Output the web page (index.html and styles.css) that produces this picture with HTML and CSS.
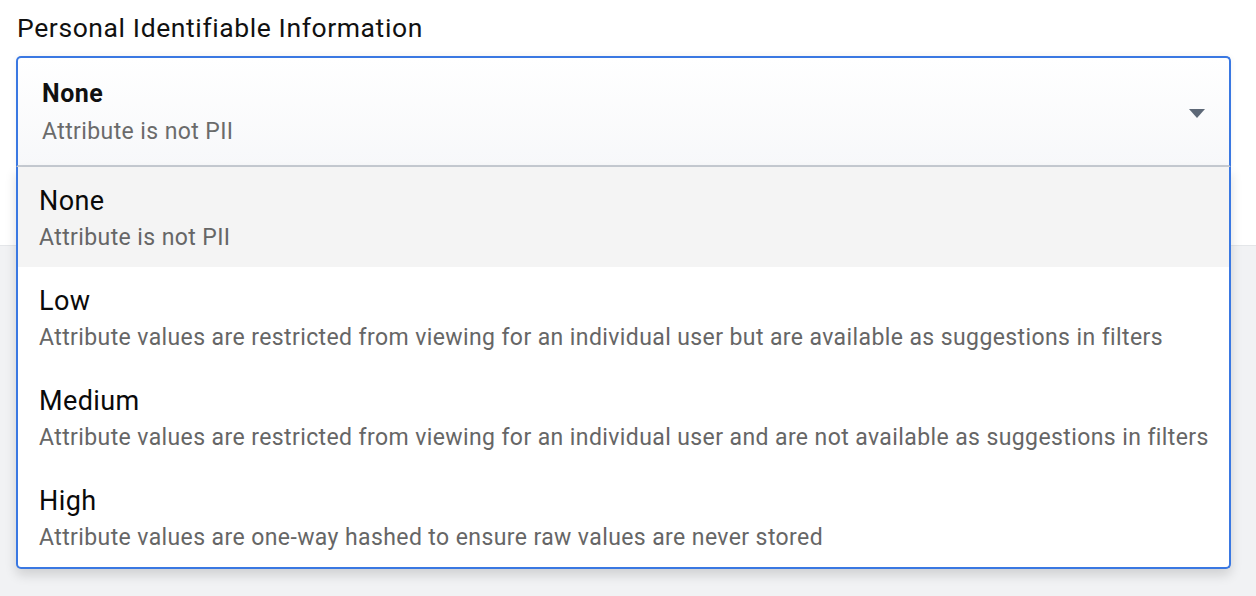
FILE: index.html
```html
<!DOCTYPE html>
<html>
<head>
<meta charset="utf-8">
<link rel="stylesheet" href="styles.css">
</head>
<body>
<div class="panel">
  <div class="label">Personal Identifiable Information</div>
  <div class="field">
    <div class="select">
      <div class="sel-text">
        <div class="sel-title">None</div>
        <div class="sel-sub">Attribute is not PII</div>
      </div>
      <svg class="arrow" width="16" height="9" viewBox="0 0 16 9"><path d="M0 0 H16 L8 9 Z" fill="#5d6877"/></svg>
    </div>
    <div class="menu">
      <div class="item active">
        <div class="title">None</div>
        <div class="sub">Attribute is not PII</div>
      </div>
      <div class="item">
        <div class="title">Low</div>
        <div class="sub">Attribute values are restricted from viewing for an individual user but are available as suggestions in filters</div>
      </div>
      <div class="item">
        <div class="title">Medium</div>
        <div class="sub">Attribute values are restricted from viewing for an individual user and are not available as suggestions in filters</div>
      </div>
      <div class="item">
        <div class="title">High</div>
        <div class="sub">Attribute values are one-way hashed to ensure raw values are never stored</div>
      </div>
    </div>
  </div>
</div>
</body>
</html>
```
FILE: styles.css
```css
html, body {
  margin: 0;
  padding: 0;
}
body {
  background: #f1f2f4;
  font-family: Roboto, "Liberation Sans", sans-serif;
  width: 1256px;
  height: 596px;
  overflow: hidden;
}
.panel {
  background: #fff;
  height: 246px;
  border-bottom: 1px solid #e4e6e9;
  padding: 13px 25px 0 16px;
  box-sizing: border-box;
}
.label {
  font-size: 26.5px;
  letter-spacing: 0.6px;
  line-height: 30px;
  color: #111;
  margin-left: 1px;
  margin-bottom: 13px;
}
.field {
  position: relative;
}
.select {
  display: flex;
  align-items: center;
  justify-content: space-between;
  border: 2px solid #3a78e2;
  border-bottom: 2px solid #c6cbd2;
  border-radius: 5px 5px 0 0;
  background: linear-gradient(#ffffff, #f7f8fa);
  padding: 19px 24px 19px 24px;
  box-shadow: 0 0 6px rgba(0, 0, 0, 0.06);
}
.sel-title {
  font-size: 25px;
  letter-spacing: 0.5px;
  font-weight: 700;
  line-height: 34px;
  color: #111;
}
.sel-sub {
  font-size: 23px;
  letter-spacing: 0.4px;
  line-height: 28px;
  margin-top: 7px;
  color: #6b6b6b;
}
.arrow {
  margin-top: 4px;
}
.menu {
  position: absolute;
  left: 0;
  right: 0;
  top: 100%;
  background: #fff;
  border: 2px solid #3a78e2;
  border-top: none;
  border-radius: 0 0 5px 5px;
  box-shadow: 0 6px 12px rgba(0, 0, 0, 0.14);
  overflow: hidden;
}
.item {
  height: 100px;
  box-sizing: border-box;
  padding: 17px 20px 0 21px;
}
.item.active {
  background: #f4f4f4;
}
.title {
  font-size: 27px;
  letter-spacing: 0.4px;
  line-height: 34px;
  color: #0a0a0a;
}
.sub {
  font-size: 23px;
  letter-spacing: 0.4px;
  line-height: 28px;
  margin-top: 6px;
  color: #666;
  white-space: nowrap;
}
```
